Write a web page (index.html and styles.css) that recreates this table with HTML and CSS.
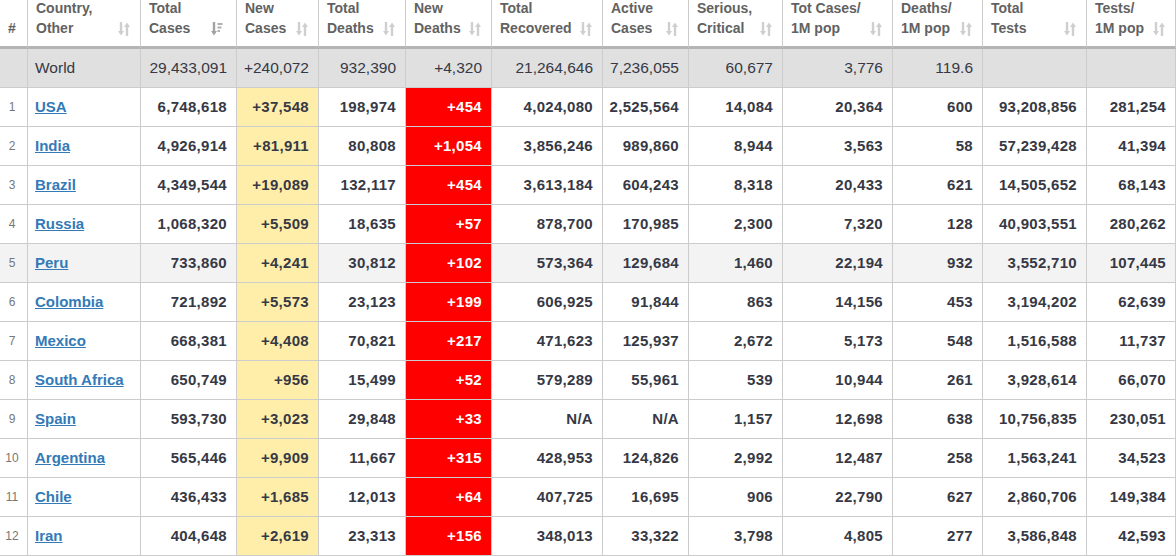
FILE: index.html
```html
<!DOCTYPE html>
<html lang="en">
<head>
<meta charset="utf-8">
<title>Coronavirus Cases</title>
<link rel="stylesheet" href="styles.css">
</head>
<body>
<svg class="defs" width="0" height="0" aria-hidden="true">
  <symbol id="sb" viewBox="0 0 12 14">
    <path d="M3 0V10" stroke="#cfcfcf" stroke-width="2.4" fill="none"/>
    <path d="M0 9H6L3 13.5Z" fill="#cfcfcf"/>
    <path d="M9 4V14" stroke="#cfcfcf" stroke-width="2.4" fill="none"/>
    <path d="M6 5H12L9 0.5Z" fill="#cfcfcf"/>
  </symbol>
  <symbol id="sd" viewBox="0 0 12 14">
    <path d="M3 0V10" stroke="#a3a3a3" stroke-width="2.4" fill="none"/>
    <path d="M0 9H6L3 13.5Z" fill="#a3a3a3"/>
    <rect x="6.5" y="1" width="5" height="2" fill="#b0b0b0"/>
    <rect x="6.5" y="4.5" width="4" height="2" fill="#b0b0b0"/>
    <rect x="6.5" y="8" width="2.5" height="2" fill="#b0b0b0"/>
  </symbol>
</svg>
<div class="table">
  <div class="row head">
    <div class="cell th hash"><span>#</span></div>
    <div class="cell th"><span>Country,<br>Other</span><svg class="sort"><use href="#sb"/></svg></div>
    <div class="cell th"><span>Total<br>Cases</span><svg class="sort desc"><use href="#sd"/></svg></div>
    <div class="cell th"><span>New<br>Cases</span><svg class="sort"><use href="#sb"/></svg></div>
    <div class="cell th"><span>Total<br>Deaths</span><svg class="sort"><use href="#sb"/></svg></div>
    <div class="cell th"><span>New<br>Deaths</span><svg class="sort"><use href="#sb"/></svg></div>
    <div class="cell th"><span>Total<br>Recovered</span><svg class="sort"><use href="#sb"/></svg></div>
    <div class="cell th"><span>Active<br>Cases</span><svg class="sort"><use href="#sb"/></svg></div>
    <div class="cell th"><span>Serious,<br>Critical</span><svg class="sort"><use href="#sb"/></svg></div>
    <div class="cell th"><span>Tot&nbsp;Cases/<br>1M pop</span><svg class="sort"><use href="#sb"/></svg></div>
    <div class="cell th"><span>Deaths/<br>1M pop</span><svg class="sort"><use href="#sb"/></svg></div>
    <div class="cell th"><span>Total<br>Tests</span><svg class="sort"><use href="#sb"/></svg></div>
    <div class="cell th"><span>Tests/<br>1M pop</span><svg class="sort"><use href="#sb"/></svg></div>
  </div>
  <div class="row world">
    <div class="cell idx"></div>
    <div class="cell name">World</div>
    <div class="cell">29,433,091</div>
    <div class="cell">+240,072</div>
    <div class="cell">932,390</div>
    <div class="cell">+4,320</div>
    <div class="cell">21,264,646</div>
    <div class="cell">7,236,055</div>
    <div class="cell">60,677</div>
    <div class="cell">3,776</div>
    <div class="cell">119.6</div>
    <div class="cell"></div>
    <div class="cell"></div>
  </div>
  <div class="row">
    <div class="cell idx">1</div>
    <div class="cell name"><a href="#">USA</a></div>
    <div class="cell">6,748,618</div>
    <div class="cell nc">+37,548</div>
    <div class="cell">198,974</div>
    <div class="cell nd">+454</div>
    <div class="cell">4,024,080</div>
    <div class="cell">2,525,564</div>
    <div class="cell">14,084</div>
    <div class="cell">20,364</div>
    <div class="cell">600</div>
    <div class="cell">93,208,856</div>
    <div class="cell">281,254</div>
  </div>
  <div class="row">
    <div class="cell idx">2</div>
    <div class="cell name"><a href="#">India</a></div>
    <div class="cell">4,926,914</div>
    <div class="cell nc">+81,911</div>
    <div class="cell">80,808</div>
    <div class="cell nd">+1,054</div>
    <div class="cell">3,856,246</div>
    <div class="cell">989,860</div>
    <div class="cell">8,944</div>
    <div class="cell">3,563</div>
    <div class="cell">58</div>
    <div class="cell">57,239,428</div>
    <div class="cell">41,394</div>
  </div>
  <div class="row">
    <div class="cell idx">3</div>
    <div class="cell name"><a href="#">Brazil</a></div>
    <div class="cell">4,349,544</div>
    <div class="cell nc">+19,089</div>
    <div class="cell">132,117</div>
    <div class="cell nd">+454</div>
    <div class="cell">3,613,184</div>
    <div class="cell">604,243</div>
    <div class="cell">8,318</div>
    <div class="cell">20,433</div>
    <div class="cell">621</div>
    <div class="cell">14,505,652</div>
    <div class="cell">68,143</div>
  </div>
  <div class="row">
    <div class="cell idx">4</div>
    <div class="cell name"><a href="#">Russia</a></div>
    <div class="cell">1,068,320</div>
    <div class="cell nc">+5,509</div>
    <div class="cell">18,635</div>
    <div class="cell nd">+57</div>
    <div class="cell">878,700</div>
    <div class="cell">170,985</div>
    <div class="cell">2,300</div>
    <div class="cell">7,320</div>
    <div class="cell">128</div>
    <div class="cell">40,903,551</div>
    <div class="cell">280,262</div>
  </div>
  <div class="row hover">
    <div class="cell idx">5</div>
    <div class="cell name"><a href="#">Peru</a></div>
    <div class="cell">733,860</div>
    <div class="cell nc">+4,241</div>
    <div class="cell">30,812</div>
    <div class="cell nd">+102</div>
    <div class="cell">573,364</div>
    <div class="cell">129,684</div>
    <div class="cell">1,460</div>
    <div class="cell">22,194</div>
    <div class="cell">932</div>
    <div class="cell">3,552,710</div>
    <div class="cell">107,445</div>
  </div>
  <div class="row">
    <div class="cell idx">6</div>
    <div class="cell name"><a href="#">Colombia</a></div>
    <div class="cell">721,892</div>
    <div class="cell nc">+5,573</div>
    <div class="cell">23,123</div>
    <div class="cell nd">+199</div>
    <div class="cell">606,925</div>
    <div class="cell">91,844</div>
    <div class="cell">863</div>
    <div class="cell">14,156</div>
    <div class="cell">453</div>
    <div class="cell">3,194,202</div>
    <div class="cell">62,639</div>
  </div>
  <div class="row">
    <div class="cell idx">7</div>
    <div class="cell name"><a href="#">Mexico</a></div>
    <div class="cell">668,381</div>
    <div class="cell nc">+4,408</div>
    <div class="cell">70,821</div>
    <div class="cell nd">+217</div>
    <div class="cell">471,623</div>
    <div class="cell">125,937</div>
    <div class="cell">2,672</div>
    <div class="cell">5,173</div>
    <div class="cell">548</div>
    <div class="cell">1,516,588</div>
    <div class="cell">11,737</div>
  </div>
  <div class="row">
    <div class="cell idx">8</div>
    <div class="cell name"><a href="#">South Africa</a></div>
    <div class="cell">650,749</div>
    <div class="cell nc">+956</div>
    <div class="cell">15,499</div>
    <div class="cell nd">+52</div>
    <div class="cell">579,289</div>
    <div class="cell">55,961</div>
    <div class="cell">539</div>
    <div class="cell">10,944</div>
    <div class="cell">261</div>
    <div class="cell">3,928,614</div>
    <div class="cell">66,070</div>
  </div>
  <div class="row">
    <div class="cell idx">9</div>
    <div class="cell name"><a href="#">Spain</a></div>
    <div class="cell">593,730</div>
    <div class="cell nc">+3,023</div>
    <div class="cell">29,848</div>
    <div class="cell nd">+33</div>
    <div class="cell">N/A</div>
    <div class="cell">N/A</div>
    <div class="cell">1,157</div>
    <div class="cell">12,698</div>
    <div class="cell">638</div>
    <div class="cell">10,756,835</div>
    <div class="cell">230,051</div>
  </div>
  <div class="row">
    <div class="cell idx">10</div>
    <div class="cell name"><a href="#">Argentina</a></div>
    <div class="cell">565,446</div>
    <div class="cell nc">+9,909</div>
    <div class="cell">11,667</div>
    <div class="cell nd">+315</div>
    <div class="cell">428,953</div>
    <div class="cell">124,826</div>
    <div class="cell">2,992</div>
    <div class="cell">12,487</div>
    <div class="cell">258</div>
    <div class="cell">1,563,241</div>
    <div class="cell">34,523</div>
  </div>
  <div class="row">
    <div class="cell idx">11</div>
    <div class="cell name"><a href="#">Chile</a></div>
    <div class="cell">436,433</div>
    <div class="cell nc">+1,685</div>
    <div class="cell">12,013</div>
    <div class="cell nd">+64</div>
    <div class="cell">407,725</div>
    <div class="cell">16,695</div>
    <div class="cell">906</div>
    <div class="cell">22,790</div>
    <div class="cell">627</div>
    <div class="cell">2,860,706</div>
    <div class="cell">149,384</div>
  </div>
  <div class="row">
    <div class="cell idx">12</div>
    <div class="cell name"><a href="#">Iran</a></div>
    <div class="cell">404,648</div>
    <div class="cell nc">+2,619</div>
    <div class="cell">23,313</div>
    <div class="cell nd">+156</div>
    <div class="cell">348,013</div>
    <div class="cell">33,322</div>
    <div class="cell">3,798</div>
    <div class="cell">4,805</div>
    <div class="cell">277</div>
    <div class="cell">3,586,848</div>
    <div class="cell">42,593</div>
  </div>
</div>
</body>
</html>
```

FILE: styles.css
```css
html, body {
  margin: 0;
  padding: 0;
  background: #ffffff;
}

body {
  font-family: "Liberation Sans", Arial, Helvetica, sans-serif;
  overflow: hidden;
}

.defs {
  position: absolute;
  width: 0;
  height: 0;
  overflow: hidden;
}

.table {
  display: grid;
  width: 1176px;
  grid-template-columns: 28px 113px 96px 82px 87px 86px 111px 86px 94px 110px 90px 104px 89px;
  grid-template-rows: 49px repeat(13, 39px);
}

.row {
  display: contents;
}

.cell {
  box-sizing: border-box;
  display: flex;
  align-items: center;
  justify-content: flex-end;
  padding: 0 9px 1px 9px;
  border-right: 1px solid #cccccc;
  border-bottom: 1px solid #cccccc;
  font-size: 15px;
  font-weight: bold;
  letter-spacing: 0.3px;
  color: #363945;
  white-space: nowrap;
  background: #ffffff;
}

.th {
  align-items: flex-end;
  justify-content: space-between;
  padding: 0 10px 8px 8px;
  border-bottom: 3px solid #b4b4b4;
  font-size: 14px;
  line-height: 20px;
  letter-spacing: 0;
  color: #626262;
}

.th.hash {
  justify-content: center;
  padding: 0 3px 8px 0;
}

.sort {
  width: 12px;
  height: 14px;
  flex: none;
  margin-bottom: 2px;
}

.sort.desc {
  margin-right: 3px;
}

.idx {
  justify-content: center;
  padding: 0 3px 1px 0;
  font-size: 12px;
  font-weight: normal;
  letter-spacing: 0;
  color: #777777;
}

.name {
  justify-content: flex-start;
  padding-left: 7px;
  letter-spacing: 0;
}

.name a {
  color: #337ab7;
  text-decoration: underline;
}

.world .cell {
  background: #e0e0e0;
  font-weight: normal;
  font-size: 15.5px;
  letter-spacing: 0;
}

.hover .cell {
  background: #f3f3f3;
}

.row .nc {
  background: #ffeeaa;
}

.row .nd {
  background: #ff0000;
  color: #ffffff;
}

.world .nc,
.world .nd {
  background: #e0e0e0;
  color: #363945;
}
```
